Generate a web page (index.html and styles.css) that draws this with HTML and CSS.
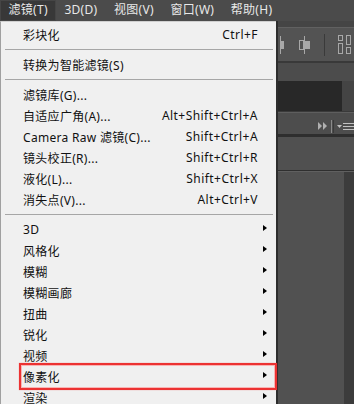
FILE: index.html
```html
<!DOCTYPE html>
<html lang="zh-CN">
<head>
    <meta charset="UTF-8">
    <title>滤镜菜单</title>
    <link rel="stylesheet" href="styles.css">
</head>
<body>
    <div class="menubar">
        <span class="menubar-item active">滤镜(T)</span>
        <span class="menubar-item">3D(D)</span>
        <span class="menubar-item">视图(V)</span>
        <span class="menubar-item">窗口(W)</span>
        <span class="menubar-item">帮助(H)</span>
    </div>

    <div class="workspace">
        <div class="menu">
            <div class="row"><span class="label">彩块化</span><span class="key">Ctrl+F</span></div>
            <div class="sep"></div>
            <div class="row"><span class="label">转换为智能滤镜(S)</span></div>
            <div class="sep"></div>
            <div class="row"><span class="label">滤镜库(G)...</span></div>
            <div class="row"><span class="label">自适应广角(A)...</span><span class="key">Alt+Shift+Ctrl+A</span></div>
            <div class="row"><span class="label">Camera Raw 滤镜(C)...</span><span class="key">Shift+Ctrl+A</span></div>
            <div class="row"><span class="label">镜头校正(R)...</span><span class="key">Shift+Ctrl+R</span></div>
            <div class="row"><span class="label">液化(L)...</span><span class="key">Shift+Ctrl+X</span></div>
            <div class="row"><span class="label">消失点(V)...</span><span class="key">Alt+Ctrl+V</span></div>
            <div class="sep"></div>
            <div class="row sub"><span class="label">3D</span><span class="arrow"></span></div>
            <div class="row sub"><span class="label">风格化</span><span class="arrow"></span></div>
            <div class="row sub"><span class="label">模糊</span><span class="arrow"></span></div>
            <div class="row sub"><span class="label">模糊画廊</span><span class="arrow"></span></div>
            <div class="row sub"><span class="label">扭曲</span><span class="arrow"></span></div>
            <div class="row sub"><span class="label">锐化</span><span class="arrow"></span></div>
            <div class="row sub"><span class="label">视频</span><span class="arrow"></span></div>
            <div class="row sub marked"><span class="label">像素化</span><span class="arrow"></span></div>
            <div class="row sub"><span class="label">渲染</span><span class="arrow"></span></div>
        </div>

        <div class="side">
            <div class="strip"></div>
            <div class="options">
                <svg width="76" height="26" viewBox="0 0 76 26">
                    <g fill="none" stroke="#a8a8a8" stroke-width="1">
                        <line x1="2.5" y1="4" x2="2.5" y2="22"/>
                        <line x1="26.5" y1="4" x2="26.5" y2="22"/>
                        <rect x="21.5" y="8.5" width="4" height="9"/>
                    </g>
                    <g fill="#a8a8a8">
                        <rect x="3" y="9" width="3" height="8"/>
                        <rect x="27" y="9" width="5" height="8"/>
                        <rect x="46" y="2" width="1" height="22" fill="#3a3a3a"/>
                    </g>
                    <g fill="none" stroke="#a8a8a8" stroke-width="1">
                        <rect x="60.5" y="3.5" width="4" height="5"/>
                        <rect x="60.5" y="11.5" width="4" height="10"/>
                        <rect x="68.5" y="3.5" width="4" height="9"/>
                        <rect x="68.5" y="15.5" width="4" height="6"/>
                    </g>
                </svg>
            </div>
            <div class="tabbar"></div>
            <div class="dark-panel"><div class="dark-fill"></div></div>
            <div class="panel-head">
                <svg width="76" height="14" viewBox="0 0 76 14">
                    <path d="M40 2 L44 6 L40 10 Z M45 2 L49 6 L45 10 Z" fill="#b0b0b0"/>
                    <rect x="53" y="0" width="1" height="13" fill="#8a8a8a"/>
                    <rect x="55" y="0" width="1" height="13" fill="#3a3a3a"/>
                    <path d="M59 5 L64 5 L61.5 8 Z" fill="#c0c0c0"/>
                    <g fill="#c0c0c0">
                        <rect x="65" y="3" width="11" height="1"/>
                        <rect x="65" y="6" width="11" height="1"/>
                        <rect x="65" y="9" width="11" height="1"/>
                    </g>
                </svg>
            </div>
            <div class="panel-mid"></div>
            <div class="panel-body"><div class="panel-edge"></div></div>
        </div>
    </div>
</body>
</html>
```

FILE: styles.css
```css
body {
    margin: 0;
    width: 354px;
    height: 404px;
    overflow: hidden;
    background-color: #505050;
    font-family: "Noto Sans", "Noto Sans CJK SC", sans-serif;
}

.menubar {
    display: flex;
    height: 21px;
    background-color: #4b4b4b;
}

.menubar-item {
    padding: 0 8px 0 8.5px;
    line-height: 20px;
    font-size: 12px;
    color: #e8e8e8;
    letter-spacing: 0.3px;
    white-space: nowrap;
}

.menubar-item.active {
    background-color: #383838;
    box-shadow: inset 0 0 0 1px #454545;
}

.workspace {
    display: flex;
    height: 383px;
}

/* dropdown */
.menu {
    width: 275px;
    background-color: #f0f0f0;
    border-left: 1px solid #a0a0a0;
    border-top: 1px solid #d0d0d0;
    padding-top: 2px;
    color: #111;
    font-size: 12px;
}

.row {
    position: relative;
    display: flex;
    align-items: center;
    height: 21px;
    padding-left: 22px;
}

.label {
    flex: 1;
    letter-spacing: 0.3px;
}

.key {
    margin-right: 18px;
    letter-spacing: 0.45px;
}

.arrow {
    width: 0;
    height: 0;
    margin: 0 9px 4px 0;
    border-left: 4px solid #000;
    border-top: 3.5px solid transparent;
    border-bottom: 3.5px solid transparent;
}

.sep {
    height: 1px;
    margin: 4px 3px 4px 4px;
    background-color: #a6a6a6;
}

.marked::after {
    content: "";
    position: absolute;
    left: 18px;
    right: -1px;
    top: -3px;
    bottom: -3px;
    border: 2px solid #ec3232;
    box-shadow: inset 0 0 0 1px rgba(255, 140, 140, 0.6), 0 0 1px rgba(236, 50, 50, 0.5);
}

/* panels on the right */
.side {
    width: 76px;
    border-left: 2px solid #2d2d2d;
    display: flex;
    flex-direction: column;
}

.strip {
    height: 6px;
    background-color: #454545;
    border-bottom: 1px solid #616161;
}

.options {
    height: 33px;
    background-color: #535353;
    border-bottom: 2px solid #393939;
    display: flex;
    align-items: center;
}

.tabbar {
    height: 18px;
    background-color: #4c4c4c;
}

.dark-panel {
    height: 30px;
    display: flex;
    background-color: #444;
    border-bottom: 1px solid #3a3a3a;
}

.dark-fill {
    width: 64px;
    background-color: #282828;
}

.panel-head {
    height: 17px;
    background-color: #4d4d4d;
    border-top: 1px solid #5e5e5e;
    border-bottom: 3px solid #2e2e2e;
    padding-top: 4px;
}

.panel-mid {
    height: 33px;
    background-color: #505050;
    border-bottom: 1px solid #2f2f2f;
}

.panel-body {
    flex: 1;
    display: flex;
    justify-content: flex-end;
    background-color: #515151;
    border-top: 1px solid #606060;
}

.panel-edge {
    width: 10px;
    background-color: #3c3c3c;
}
```
